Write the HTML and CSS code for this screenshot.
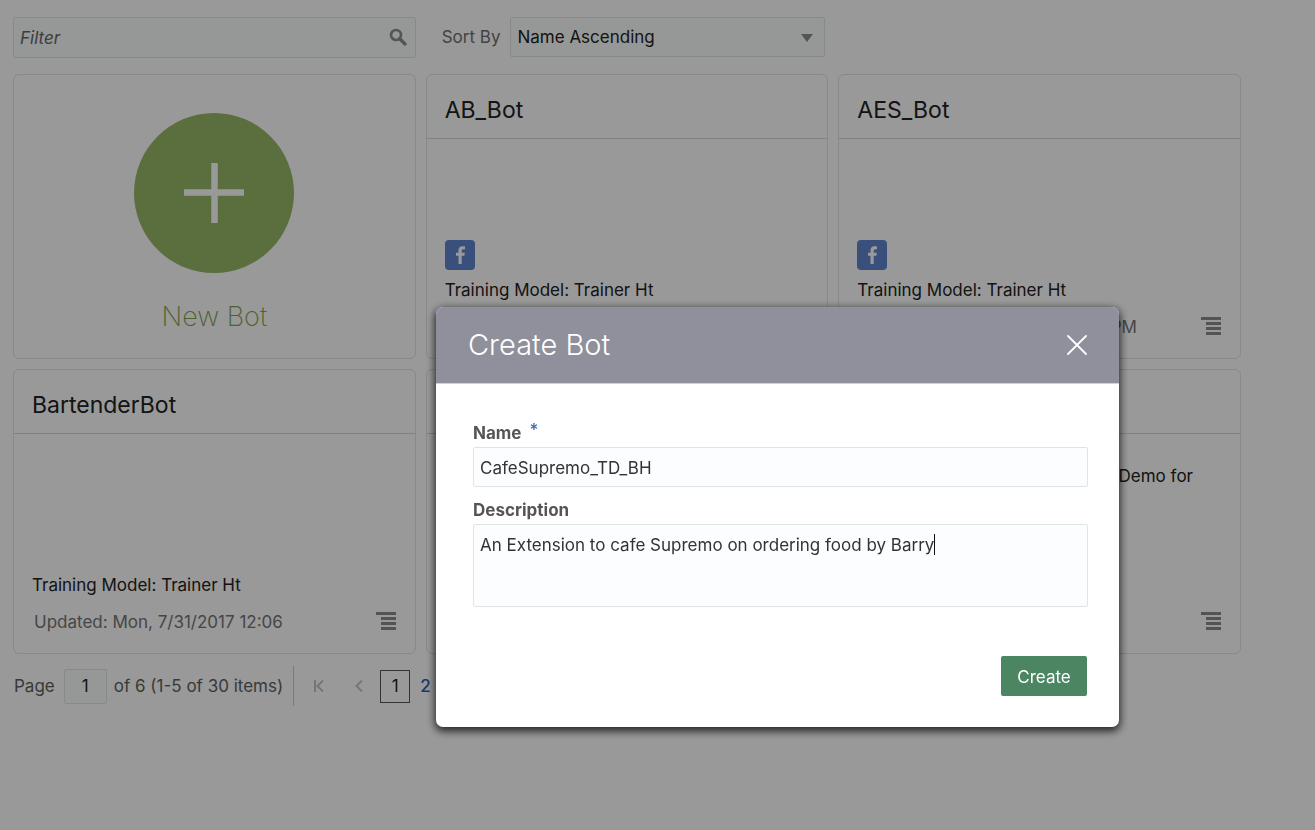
FILE: index.html
```html
<!DOCTYPE html>
<html lang="en">
<head>
<meta charset="utf-8">
<title>Bots</title>
<link rel="stylesheet" href="styles.css">
</head>
<body>
<svg width="0" height="0" class="defs" aria-hidden="true">
  <symbol id="menu" viewBox="0 0 20 18"><path d="M0 0h20v3H0zM5 5h15v3H5zM5 10h15v3H5zM5 15h15v3H5z" fill="currentColor"/></symbol>
  <symbol id="facebook" viewBox="0 0 30 30"><rect width="30" height="30" rx="4" fill="#6285cf"/><path d="M13.500 24v-8.300h-2.500v-3h2.500v-2.500q0-4 4-4h2.500v3h-1.800q-1.500 0-1.500 1.500v2h3.100l-.4 3h-2.700V24z" fill="#fff"/></symbol>
</svg>
<main class="page">
  <div class="toolbar">
    <div class="filter">
      <input type="text" placeholder="Filter" aria-label="Filter">
      <svg class="search-icon" viewBox="0 0 18 18" aria-hidden="true"><circle cx="7" cy="7" r="5" fill="none" stroke="currentColor" stroke-width="2.600"/><path d="M10.500 10.500L16 16" stroke="currentColor" stroke-width="3.200" stroke-linecap="round"/></svg>
    </div>
    <div class="sort">
      <label for="sort">Sort By</label>
      <div class="select">
        <select id="sort"><option>Name Ascending</option></select>
        <svg class="arrow" viewBox="0 0 12 8" aria-hidden="true"><path d="M0 0h12L6 8z" fill="currentColor"/></svg>
      </div>
    </div>
  </div>

  <section class="cards">
    <button type="button" class="card new-bot">
      <svg class="plus" viewBox="0 0 160 160" aria-hidden="true"><circle cx="80" cy="80" r="80" fill="#96b967"/><path d="M50 79.500h60M80.500 50v60" stroke="#fff" stroke-width="6.500"/></svg>
      <span>New Bot</span>
    </button>
    <article class="card">
      <h2>AB_Bot</h2>
      <div class="body">
        <svg class="channel" role="img" aria-label="Facebook"><use href="#facebook"/></svg>
        <p class="model">Training Model: Trainer Ht</p>
        <div class="foot"></div>
      </div>
    </article>
    <article class="card">
      <h2>AES_Bot</h2>
      <div class="body">
        <svg class="channel" role="img" aria-label="Facebook"><use href="#facebook"/></svg>
        <p class="model">Training Model: Trainer Ht</p>
        <div class="foot"><span class="time">PM</span><button type="button" class="menu" aria-label="Options"><svg><use href="#menu"/></svg></button></div>
      </div>
    </article>
    <article class="card">
      <h2>BartenderBot</h2>
      <div class="body">
        <p class="model">Training Model: Trainer Ht</p>
        <div class="foot"><span class="updated">Updated: Mon, 7/31/2017 12:06</span><button type="button" class="menu" aria-label="Options"><svg><use href="#menu"/></svg></button></div>
      </div>
    </article>
    <article class="card"><h2></h2><div class="body"></div></article>
    <article class="card">
      <h2></h2>
      <div class="body">
        <p class="summary">Demo for</p>
        <div class="foot"><button type="button" class="menu" aria-label="Options"><svg><use href="#menu"/></svg></button></div>
      </div>
    </article>
  </section>

  <nav class="pager" aria-label="Pages">
    <label for="page">Page</label>
    <input id="page" type="text" value="1">
    <span class="count">of 6 (1-5 of 30 items)</span>
    <div class="steps">
      <button type="button" class="step" aria-label="First page" disabled><svg viewBox="0 0 10 12"><path d="M1 0v12M9 0.500L3.500 6L9 11.500"/></svg></button>
      <button type="button" class="step" aria-label="Previous page" disabled><svg viewBox="0 0 10 12"><path d="M8 0.500L2.500 6L8 11.500"/></svg></button>
      <span class="current">1</span>
      <a href="#2">2</a>
    </div>
  </nav>
</main>

<div class="overlay">
  <form class="dialog" role="dialog" aria-labelledby="dialog-title">
    <header>
      <h1 id="dialog-title">Create Bot</h1>
      <button type="button" class="close" aria-label="Close"><svg viewBox="0 0 20 20"><path d="M1 1l18 18M19 1L1 19" stroke="#fff" stroke-width="1.800" stroke-linecap="round"/></svg></button>
    </header>
    <div class="fields">
      <label for="name">Name <sup class="required">*</sup></label>
      <input id="name" type="text" value="CafeSupremo_TD_BH">
      <label for="description">Description</label>
      <div class="area">
        <textarea id="description">An Extension to cafe Supremo on ordering food by Barry</textarea>
        <span class="caret"></span>
      </div>
      <button type="submit" class="create">Create</button>
    </div>
  </form>
</div>
</body>
</html>
```
FILE: styles.css
```css
* { box-sizing: border-box; }
body {
  margin: 0;
  background: #fff;
  color: #222;
  font: 17px/24px Inter, "Liberation Sans", sans-serif;
}
h1, h2, p { margin: 0; font-weight: 400; }
input, select, textarea, button { font: inherit; color: inherit; }
button { border: 0; padding: 0; background: none; }
svg { display: block; }
.defs { position: absolute; }

.page { padding: 17px 74px 16px 13px; }
.toolbar {
  display: grid;
  grid-template-columns: repeat(3, 1fr);
  gap: 10px;
  margin-bottom: 16px;
}
.filter, .select, .area { position: relative; }
.filter input, .select select, .pager input {
  border: 1px solid #dfe7e6;
  border-radius: 2px;
  background: #fafefc;
}
.filter input { display: block; width: 100%; height: 41px; padding: 0 40px 0 6px; }
.filter input::placeholder { color: #666; font-style: italic; opacity: 1; }
.search-icon { position: absolute; top: 11px; right: 9px; width: 18px; height: 18px; color: #8c8c8e; }
.sort { display: flex; align-items: flex-start; gap: 10px; padding: 0 3px 0 16px; color: #707070; }
.sort label { line-height: 40px; white-space: nowrap; }
.select { flex: 1; color: #222; }
.select select { display: block; width: 100%; height: 40px; padding: 0 6px; appearance: none; }
.arrow { position: absolute; top: 17px; right: 12px; width: 12px; height: 8px; color: #8c8c8c; }

.cards { display: grid; grid-template-columns: repeat(3, 1fr); gap: 10px; }
.card {
  display: flex;
  flex-direction: column;
  min-height: 285px;
  border: 1px solid #e2e4e8;
  border-radius: 6px;
}
.card h2 {
  height: 64px;
  padding: 6px 18px 0;
  border-bottom: 1px solid #d6d9dc;
  font-size: 23px;
  line-height: 58px;
}
.body { flex: 1; display: flex; flex-direction: column; justify-content: flex-end; padding: 24px 19px 19px 18px; }
.new-bot { align-items: center; padding-top: 38px; color: #7fa350; font-size: 27px; font-weight: 200; line-height: 40px; }
.plus { width: 160px; height: 160px; margin-bottom: 24px; }
.channel { width: 30px; height: 30px; margin-bottom: 8px; }
.foot { display: flex; justify-content: flex-end; align-items: center; min-height: 24px; margin-top: 13px; color: #757575; }
.time { margin-right: 64px; }
.updated { flex: 1; padding-left: 2px; }
.menu svg { width: 20px; height: 18px; color: #8a8c8e; }
.menu { padding-bottom: 2px; }
.summary { margin: 6px 28px auto 0; text-align: right; }

.pager { display: flex; align-items: center; margin-top: 12px; padding-left: 1px; color: #606060; }
.pager input { width: 43px; height: 35px; margin: 0 7px 0 9px; padding: 0; color: #222; text-align: center; }
.steps { display: flex; align-items: center; height: 40px; margin-left: 10px; padding-left: 20px; border-left: 1px solid #ccc; }
.step { margin-right: 30px; }
.step svg { width: 10px; height: 12px; fill: none; stroke: #c4c4c4; stroke-width: 2; }
.step + .step { margin-right: 16px; }
.current { width: 30px; height: 33px; margin-right: 10px; border: 1px solid #555; color: #222; line-height: 31px; text-align: center; }
.steps a { color: #2f5fba; font-weight: 500; text-decoration: none; }

.overlay { position: fixed; inset: 0; background: rgba(0, 0, 0, .4); }
.dialog {
  position: absolute;
  top: 307px;
  left: 436px;
  right: 196px;
  overflow: hidden;
  border-radius: 7px;
  background: #fff;
  color: #333;
  box-shadow: 0 3px 8px 1px rgba(0, 0, 0, .8);
}
.dialog header {
  display: flex;
  justify-content: space-between;
  align-items: center;
  height: 77px;
  padding: 0 32px;
  border-bottom: 1px solid #cfd2da;
  background: #8f909c;
  color: #fff;
}
.dialog h1 { font-size: 29px; font-weight: 300; line-height: 40px; }
.close svg { width: 20px; height: 20px; }
.fields { display: flex; flex-direction: column; padding: 37px 31px 31px 37px; }
.fields label { color: #555; font-weight: 700; }
.required { margin-left: 4px; color: #3a65b8; font-size: 17px; font-weight: 500; line-height: 0; vertical-align: 3px; }
.fields input, .fields textarea {
  display: block;
  width: 100%;
  border: 1px solid #dfe4e7;
  border-radius: 2px;
  background: #fcfdfe;
}
.fields input { height: 40px; margin: 2px 0 11px; padding: 1px 6px 0; }
.area { margin-top: 2px; }
.fields textarea { height: 83px; padding: 8px 6px; resize: none; }
.caret { position: absolute; top: 10px; left: 461px; width: 1px; height: 21px; background: #111; }
.create { align-self: flex-end; width: 86px; height: 40px; margin: 49px 1px 0 0; padding-top: 2px; border-radius: 2px; background: #4c8562; color: #fff; }
```
